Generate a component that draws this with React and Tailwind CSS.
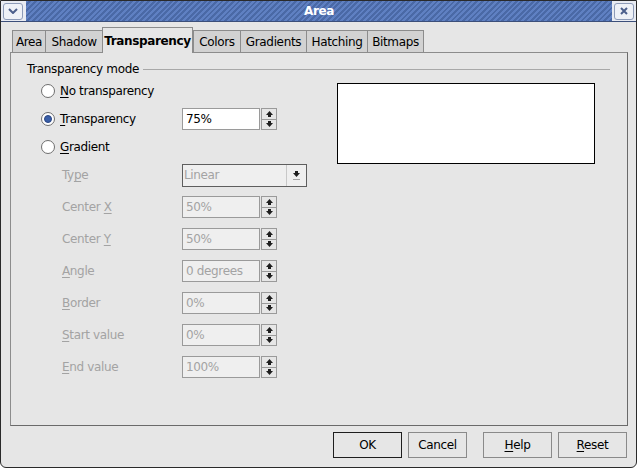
import React from 'react'

function ArrowUp() {
  return (
    <svg width="7" height="6" viewBox="0 0 7 6">
      <path d="M3.5 0 L7 4 L0 4 Z" fill="#1e1e1e" />
      <rect x="2" y="4" width="3" height="2" fill="#1e1e1e" />
    </svg>
  )
}

function ArrowDown() {
  return (
    <svg width="7" height="6" viewBox="0 0 7 6">
      <rect x="2" y="0" width="3" height="2" fill="#1e1e1e" />
      <path d="M0 2 L7 2 L3.5 6 Z" fill="#1e1e1e" />
    </svg>
  )
}

function Spin() {
  return (
    <div className="ml-[1px] flex h-[22px] w-[16px] flex-col border border-[#9a9a9a] bg-[#e6e6e6]">
      <div className="flex flex-1 items-center justify-center border-b border-[#9a9a9a]">
        <ArrowUp />
      </div>
      <div className="flex flex-1 items-center justify-center">
        <ArrowDown />
      </div>
    </div>
  )
}

function Field({ value, disabled }) {
  return (
    <div className="flex items-center">
      <div
        className={
          disabled
            ? 'flex h-[22px] w-[78px] items-center border border-[#9a9a9a] bg-[#efefef] pl-[3px] text-[#a3a3a3]'
            : 'flex h-[22px] w-[78px] items-center border border-[#9a9a9a] bg-white pl-[3px] text-black'
        }
      >
        {value}
      </div>
      <Spin />
    </div>
  )
}

function Radio({ checked }) {
  return (
    <div className="flex h-[14px] w-[14px] items-center justify-center rounded-full border border-[#6e6e6e] bg-white">
      {checked && <div className="h-[8px] w-[8px] rounded-full border border-[#2a4583] bg-[#3a5fa8]" />}
    </div>
  )
}

function Mn({ pre = '', k, post = '' }) {
  return (
    <span>
      {pre}
      <span className="underline underline-offset-2">{k}</span>
      {post}
    </span>
  )
}

const rows = [
  { label: <Mn pre="Center " k="X" />, value: '50%' },
  { label: <Mn pre="Center " k="Y" />, value: '50%' },
  { label: <Mn k="A" post="ngle" />, value: '0 degrees' },
  { label: <Mn k="B" post="order" />, value: '0%' },
  { label: <Mn k="S" post="tart value" />, value: '0%' },
  { label: <Mn k="E" post="nd value" />, value: '100%' },
]

const tabs = [
  { name: 'Area', w: 'w-[33px]' },
  { name: 'Shadow', w: 'w-[57px]' },
  { name: 'Transparency', w: 'w-[91px]', active: true },
  { name: 'Colors', w: 'w-[47px]' },
  { name: 'Gradients', w: 'w-[66px]' },
  { name: 'Hatching', w: 'w-[61px]' },
  { name: 'Bitmaps', w: 'w-[57px]' },
]

export default function App() {
  return (
    <div className="flex h-[468px] w-[637px] flex-col overflow-hidden rounded-b-[6px] border border-[#2a2a2a] bg-[#e6e6e6] font-['DejaVu_Sans',sans-serif] text-[12px] leading-[14px] tracking-[-0.35px] text-black">
      {/* Title bar */}
      <div className="flex h-[21px] items-center border-b border-[#3c4f7a] bg-[#e8ebf2]">
        <div className="ml-[2px] flex h-[17px] w-[20px] items-center justify-center rounded-[3px] border border-[#8d9bb8] bg-[#eef1f7]">
          <svg width="10" height="6" viewBox="0 0 10 6">
            <path d="M1 1 L5 5 L9 1" stroke="#4b5f8c" strokeWidth="2" fill="none" />
          </svg>
        </div>
        <div className="ml-[3px] flex h-full flex-1 items-center justify-center bg-[repeating-linear-gradient(135deg,#5f80c2_0px,#5f80c2_2px,#4a69a6_2px,#4a69a6_4px)] font-bold text-white">
          Area
        </div>
        <div className="mx-[2px] flex h-[17px] w-[20px] items-center justify-center rounded-[3px] border border-[#8d9bb8] bg-[#eef1f7]">
          <svg width="8" height="8" viewBox="0 0 8 8">
            <path d="M1 1 L7 7 M7 1 L1 7" stroke="#4b5f8c" strokeWidth="2" />
          </svg>
        </div>
      </div>

      {/* Tabs */}
      <div className="mt-[5px] flex h-[25px] items-end pl-[11px]">
        {tabs.map((t, i) =>
          t.active ? (
            <div
              key={i}
              className={`relative z-10 -mb-px flex h-[26px] items-center justify-center border-x border-t border-[#8c8c8c] bg-[#e6e6e6] font-bold ${t.w}`}
            >
              {t.name}
            </div>
          ) : (
            <div
              key={i}
              className={`flex h-[22px] items-center justify-center border-l border-t border-[#8c8c8c] bg-[#d2d2d2] ${t.w} ${i === tabs.length - 1 ? 'border-r' : ''}`}
            >
              {t.name}
            </div>
          ),
        )}
      </div>

      {/* Panel */}
      <div className="ml-[9px] mr-[8px] flex h-[374px] flex-col border border-[#8c8c8c] border-b-[#6a6a6a] border-r-[#6a6a6a] pl-[16px] pr-[17px] pt-[8px]">
        <div className="flex h-[16px] items-center">
          <span>Transparency mode</span>
          <div className="ml-[4px] h-px flex-1 bg-[#a8a8a8]" />
        </div>

        <div className="flex">
          <div className="w-[310px]">
            <div className="flex h-[28px] items-center pl-[14px]">
              <Radio />
              <span className="ml-[5px]">
                <Mn k="N" post="o transparency" />
              </span>
            </div>
            <div className="flex h-[28px] items-center pl-[14px]">
              <div className="flex w-[141px] items-center">
                <Radio checked />
                <span className="ml-[5px]">
                  <Mn k="T" post="ransparency" />
                </span>
              </div>
              <Field value="75%" />
            </div>
            <div className="flex h-[28px] items-center pl-[14px]">
              <Radio />
              <span className="ml-[5px]">
                <Mn k="G" post="radient" />
              </span>
            </div>

            <div className="flex h-[28px] items-center pl-[35px] text-[#a3a3a3]">
              <div className="w-[120px]">
                <Mn pre="Ty" k="p" post="e" />
              </div>
              <div className="flex h-[23px] w-[125px] items-center border border-[#5e5e5e] bg-[#efefef]">
                <span className="flex-1 pl-[1px]">Linear</span>
                <div className="flex h-full w-[20px] flex-col items-center justify-center border-l border-[#c8c8c8]">
                  <svg width="7" height="9" viewBox="0 0 7 9">
                    <rect x="2" y="0" width="3" height="2" fill="#1e1e1e" />
                    <path d="M0 2 L7 2 L3.5 6 Z" fill="#1e1e1e" />
                    <rect x="0" y="8" width="7" height="1" fill="#a3a3a3" />
                  </svg>
                </div>
              </div>
            </div>

            <div className="mt-[2px]">
              {rows.map((r, i) => (
                <div key={i} className="flex h-[32px] items-center pl-[35px] text-[#a3a3a3]">
                  <div className="w-[120px]">{r.label}</div>
                  <Field value={r.value} disabled />
                </div>
              ))}
            </div>
          </div>

          <div className="mt-[6px] h-[81px] w-[258px] border border-black bg-white" />
        </div>
      </div>

      {/* Buttons */}
      <div className="mt-[6px] flex justify-end gap-[6px] pr-[9px]">
        <button className="flex h-[26px] w-[69px] items-center justify-center border border-[#1e1e1e] bg-[#e6e6e6]">
          OK
        </button>
        <button className="flex h-[26px] w-[59px] items-center justify-center border border-[#8a8a8a] bg-[#e6e6e6]">
          Cancel
        </button>
        <button className="ml-[10px] flex h-[26px] w-[69px] items-center justify-center border border-[#8a8a8a] bg-[#e6e6e6]">
          <Mn k="H" post="elp" />
        </button>
        <button className="flex h-[26px] w-[69px] items-center justify-center border border-[#8a8a8a] bg-[#e6e6e6]">
          <Mn k="R" post="eset" />
        </button>
      </div>
    </div>
  )
}
